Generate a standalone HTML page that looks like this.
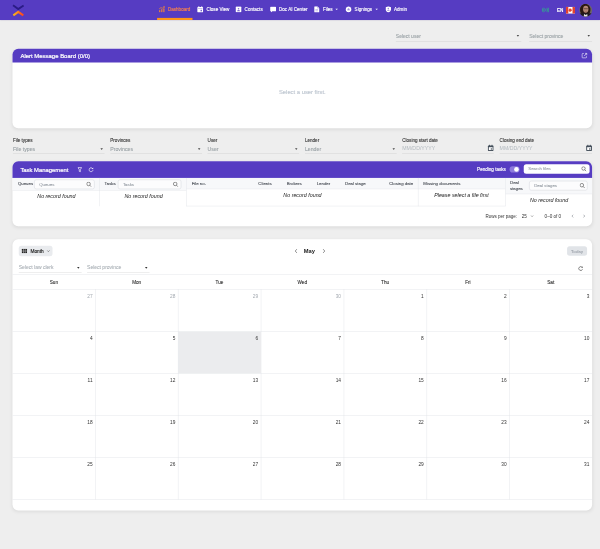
<!DOCTYPE html>
<html>
<head>
<meta charset="utf-8">
<title>Dashboard</title>
<style>
html,body{margin:0;padding:0;width:600px;height:549px;overflow:hidden;background:#eeeeee;}
*{box-sizing:border-box;}
#app{position:absolute;left:0;top:0;width:1440px;height:1318px;transform:scale(0.416667);transform-origin:0 0;filter:opacity(0.9999);font-family:"Liberation Sans",sans-serif;color:#222;}
.abs{position:absolute;}
.md{font-weight:normal;-webkit-text-stroke:0.35px currentColor;}
/* navbar */
#nav{position:absolute;left:0;top:0;width:1440px;height:48px;box-shadow:0 1px 3px rgba(40,20,120,0.35);background:rgba(85,59,194,0.995);}
.ni{position:absolute;top:0;height:48px;color:#fff;font-size:11px;font-weight:normal;-webkit-text-stroke:0.4px currentColor;line-height:44px;white-space:nowrap;}
.ni svg{position:absolute;top:15px;left:0;width:14px;height:14px;}
.ni span{position:absolute;left:22px;top:0;}
.nico{position:absolute;top:15px;}
.nt{position:absolute;top:0;height:48px;font-size:11px;font-weight:normal;-webkit-text-stroke:0.3px currentColor;line-height:44px;white-space:nowrap;}
.caret{position:absolute;top:20.5px;width:0;height:0;border-left:3px solid transparent;border-right:3px solid transparent;border-top:3.6px solid #fff;margin-left:1.5px;}
/* cards */
.card{position:absolute;left:30px;width:1391px;background:#fff;border-radius:14px;box-shadow:0 3px 9px rgba(0,0,0,0.075);}
.chead{position:absolute;left:0;top:0;width:100%;background:rgba(85,59,194,0.995);border-radius:14px 14px 0 0;color:#fff;font-weight:normal;}
.sel{position:absolute;border-bottom:1px solid #cfcfcf;color:#9aa2a6;font-size:12px;line-height:25px;-webkit-text-stroke:0.25px currentColor;}
.sel i.sm{right:5px;border-left-width:3.5px;border-right-width:3.5px;border-top-width:4.5px;border-top-color:#333;}
.sel i{position:absolute;right:4px;width:0;height:0;border-left:3.8px solid transparent;border-right:3.8px solid transparent;border-top:4.5px solid #4a4a4a;}
.flabel{position:absolute;font-size:11px;font-weight:normal;-webkit-text-stroke:0.28px currentColor;color:#383838;}
.nrf{position:absolute;font-size:12.8px;font-style:italic;color:#222;white-space:nowrap;}
.th{position:absolute;font-size:10.4px;font-weight:normal;-webkit-text-stroke:0.25px currentColor;color:#4a4f57;white-space:nowrap;}
.sbox{position:absolute;border:1px solid #ced2d8;border-radius:5px;background:rgba(252,252,253,0.995);color:#8f969e;font-size:10.4px;-webkit-text-stroke:0.15px currentColor;}
.dow{position:absolute;height:35px;line-height:36px;text-align:center;font-size:11.2px;font-weight:normal;-webkit-text-stroke:0.15px currentColor;color:#222;}
.dn{position:absolute;font-size:11.5px;line-height:13px;color:#343434;text-align:right;width:40px;}
.dn.o{color:#a3a9b0;}
.vl{position:absolute;width:1px;background:#dfe2e6;}
.hl{position:absolute;height:1px;background:#dfe2e6;}
</style>
</head>
<body>
<div id="app">

<!-- NAVBAR -->
<div id="nav">
  <svg class="abs" style="left:28px;top:8.500px" width="32" height="32" viewBox="0 0 32 32">
    <defs><linearGradient id="lg" x1="0" y1="0" x2="1" y2="0"><stop offset="0" stop-color="#f8b51c"/><stop offset="0.5" stop-color="#ff861a"/><stop offset="0.55" stop-color="#ff6a1a"/><stop offset="1" stop-color="#ff451f"/></linearGradient></defs>
    <path d="M3.300 3.600L15.800 12.600 28.600 4" fill="none" stroke="#2b1b86" stroke-width="4.500"/>
    <path d="M4 27.800L15.800 19.400 28 27.800" fill="none" stroke="url(#lg)" stroke-width="5"/>
  </svg>
  <svg class="nico" style="left:381px" width="15" height="15" viewBox="0 0 15 15"><rect x="1" y="9.500" width="2.600" height="5" fill="#ff8a2a"/><rect x="6" y="7" width="2.600" height="7.500" fill="#ff8a2a"/><rect x="11" y="5" width="2.600" height="9.500" fill="#ff8a2a"/><path d="M1 6.500L5.500 3.200 8.500 4.800 13.500 1" fill="none" stroke="#ff8a2a" stroke-width="1.600"/><path d="M10.500 0.500h3.800v3.800" fill="none" stroke="#ff8a2a" stroke-width="1.400"/></svg>
  <div class="nt" style="left:403px;color:#f9814a;">Dashboard</div>
  <svg class="nico" style="left:473px" width="15" height="15" viewBox="0 0 15 15"><rect x="0.500" y="1.800" width="14" height="13" rx="1.800" fill="#fff"/><rect x="3" y="0" width="2.200" height="3.500" rx="0.600" fill="#fff"/><rect x="9.800" y="0" width="2.200" height="3.500" rx="0.600" fill="#fff"/><rect x="2" y="5.300" width="11" height="1.100" fill="#553bc2" opacity="0.700"/><rect x="8.200" y="8.600" width="3.600" height="3.600" fill="#553bc2" opacity="0.800"/></svg>
  <div class="nt" style="left:495.5px;color:#fff;">Close View</div>
  <svg class="nico" style="left:565px" width="15" height="15" viewBox="0 0 15 15"><rect x="0.500" y="0.500" width="14" height="14" rx="1.800" fill="#fff"/><circle cx="7.500" cy="6" r="1.900" fill="#553bc2" opacity="0.750"/><path d="M4 11.800c0-2.300 1.600-3 3.500-3s3.500.7 3.500 3z" fill="#553bc2" opacity="0.750"/></svg>
  <div class="nt" style="left:587px;color:#fff;">Contacts</div>
  <svg class="nico" style="left:648px" width="15" height="15" viewBox="0 0 15 15"><path d="M2 1h11a1.500 1.500 0 0 1 1.500 1.500v8a1.500 1.500 0 0 1-1.500 1.500H5.500L2.500 14.800V12H2A1.500 1.500 0 0 1 .5 10.500v-8A1.500 1.500 0 0 1 2 1z" fill="#fff"/></svg>
  <div class="nt" style="left:669.5px;color:#fff;">Doc AI Center</div>
  <svg class="nico" style="left:754px" width="13" height="15" viewBox="0 0 13 15"><path d="M1.500 0h6.500l4.500 4.500V13.500a1.500 1.500 0 0 1-1.500 1.500h-9.500A1.500 1.500 0 0 1 0 13.500v-12A1.500 1.500 0 0 1 1.500 0z" fill="#fff"/><path d="M8 0v4.500h4.500" fill="none" stroke="#553bc2" stroke-width="0.900" opacity="0.700"/><path d="M3 8h6.500M3 11h6.500" stroke="#553bc2" stroke-width="1.100" opacity="0.700"/></svg>
  <div class="nt" style="left:775px;color:#fff;">Files</div>
  <svg class="nico" style="left:829px" width="15" height="15" viewBox="0 0 15 15"><path d="M7.500 0l1.700 1.300 2.100-.3.800 2 2 .800-.3 2.100L15 7.500l-1.200 1.600.3 2.100-2 .800-.8 2-2.100-.3L7.500 15l-1.700-1.300-2.100.3-.8-2-2-.800.3-2.100L0 7.500l1.200-1.600-.3-2.100 2-.800.8-2 2.100.3z" fill="#fff"/><path d="M7.500 3.600l1.200 2.500 2.700.3-2 1.900.5 2.700-2.400-1.300-2.400 1.300.5-2.700-2-1.900 2.700-.3z" fill="#553bc2" opacity="0.550"/></svg>
  <div class="nt" style="left:851px;color:#fff;">Signings</div>
  <svg class="nico" style="left:925px" width="14" height="15" viewBox="0 0 14 15"><path d="M7 0l6.500 2.300v4.700c0 3.800-2.700 6.400-6.500 8-3.800-1.600-6.500-4.200-6.500-8V2.300z" fill="#fff"/><circle cx="7" cy="5.500" r="1.800" fill="#553bc2" opacity="0.600"/><path d="M3.800 10.500c.4-1.800 1.700-2.300 3.200-2.300s2.800.5 3.200 2.300z" fill="#553bc2" opacity="0.600"/></svg>
  <div class="nt" style="left:945.5px;color:#fff;">Admin</div>
  <div class="abs" style="left:377px;top:43px;width:85px;height:5px;background:#ff9519;"></div>
  <div class="caret" style="left:803px;"></div>
  <div class="caret" style="left:899px;"></div>

  <!-- right side -->
  <svg class="abs" style="left:1300.500px;top:16.500px" width="17" height="14" viewBox="0 0 18 15"><circle cx="9" cy="7.500" r="1.800" fill="#2db58a"/><path d="M6.200 2.800a6.500 6.500 0 0 0 0 9.400M11.800 2.800a6.500 6.500 0 0 1 0 9.400M2.800 1.600a9 9 0 0 0 0 11.800M15.200 1.600a9 9 0 0 1 0 11.800" fill="none" stroke="#2db58a" stroke-width="2"/></svg>
  <div class="abs" style="left:1336.500px;top:18px;color:#fff;font-size:11px;font-weight:bold;-webkit-text-stroke:0.2px #fff;">EN</div>
  <svg class="abs" style="left:1358px;top:15.500px" width="22" height="17" viewBox="0 0 22 17"><rect x="0" y="0" width="22" height="17" rx="2" fill="#fff"/><path d="M0 2a2 2 0 0 1 2-2h4v17H2a2 2 0 0 1-2-2z" fill="#e2412f"/><path d="M22 2a2 2 0 0 0-2-2h-4v17h4a2 2 0 0 0 2-2z" fill="#e2412f"/><path d="M11 3.500l1 2 1.500-.6-.5 2.600 1.600-.5-.6 1.500 1 .5-2.500 1.800.3 1.200-2.400-.4v2h-.8v-2l-2.400.4.300-1.200L6 8.500l1-.5-.6-1.500 1.600.5-.5-2.600 1.500.6z" fill="#e2412f"/></svg>
  <svg class="abs" style="left:1390px;top:9px" width="31" height="31" viewBox="0 0 31 31">
    <defs><clipPath id="av"><circle cx="15.500" cy="15.500" r="15.500"/></clipPath></defs>
    <g clip-path="url(#av)">
      <rect width="31" height="31" fill="#6f6763"/>
      <ellipse cx="14.500" cy="15" rx="12.500" ry="15" fill="#2a1713"/>
      <rect x="0" y="23" width="31" height="8" fill="#1f1a20"/>
      <ellipse cx="15.800" cy="13" rx="6.300" ry="8.300" fill="#b48877"/>
      <rect x="10.500" y="10.500" width="10.500" height="2.600" rx="1.200" fill="#5b4038" opacity="0.850"/>
      <path d="M12 24.500l3.800 2.500 3.500-2.500 1 6.500h-9.500z" fill="#e8e4e4"/>
      <path d="M12.800 17.500q3 2 6 0" stroke="#8b5a50" stroke-width="1" fill="none"/>
    </g>
  </svg>
</div>

<!-- top selects -->
<div class="sel" style="left:950px;top:76px;width:301px;height:24px;padding-left:0;line-height:25px;">Select user<i style="top:8.300px;right:5px"></i></div>
<div class="sel" style="left:1270px;top:76px;width:151px;height:24px;padding-left:0;line-height:25px;">Select province<i style="top:8.300px;right:5px"></i></div>

<!-- ALERT CARD -->
<div class="card" style="top:117px;height:191px;">
  <div class="chead md" style="height:33px;line-height:33px;font-size:14.3px;-webkit-text-stroke:0.5px #fff;padding-left:19px;">Alert Message Board (0/0)</div>
  <svg class="abs" style="left:1365px;top:9px" width="15" height="15" viewBox="0 0 15 15"><path d="M6 2.500H3.500a1.500 1.500 0 0 0-1.500 1.500v7.500a1.500 1.500 0 0 0 1.500 1.500H11a1.500 1.500 0 0 0 1.500-1.500V9" fill="none" stroke="#fff" stroke-width="1.500"/><path d="M7 8.500L13 2.500M9 2h4.500v4.500" fill="none" stroke="#fff" stroke-width="1.500"/></svg>
  <div class="abs" style="left:0;top:96px;width:100%;text-align:center;font-size:14px;color:#bfc7d1;-webkit-text-stroke:0.35px currentColor;">Select a user first.</div>
</div>

<!-- FILTERS -->
<div class="flabel" style="left:31px;top:330px;">File types</div>
<div class="sel" style="left:31px;top:345px;width:220px;height:24px;line-height:27px;font-size:12.5px;">File types<i style="top:10.500px"></i></div>
<div class="flabel" style="left:264.6px;top:330px;">Provinces</div>
<div class="sel" style="left:264.6px;top:345px;width:220px;height:24px;line-height:27px;font-size:12.5px;">Provinces<i style="top:10.500px"></i></div>
<div class="flabel" style="left:498.2px;top:330px;">User</div>
<div class="sel" style="left:498.2px;top:345px;width:220px;height:24px;line-height:27px;font-size:12.5px;">User<i style="top:10.500px"></i></div>
<div class="flabel" style="left:731.8px;top:330px;">Lender</div>
<div class="sel" style="left:731.8px;top:345px;width:220px;height:24px;line-height:27px;font-size:12.5px;">Lender<i style="top:10.500px"></i></div>
<div class="flabel" style="left:965.4px;top:330px;">Closing start date</div>
<div class="sel" style="left:965.4px;top:345px;width:220px;height:24px;line-height:21px;font-size:12.5px;color:#b3bac0;-webkit-text-stroke:0;">MM/DD/YYYY
  <svg class="abs" style="right:0;top:2px" width="15.500" height="16" viewBox="0 0 13 14"><rect x="0.500" y="2" width="12" height="11.500" rx="1.500" fill="#434e5a"/><rect x="2.500" y="5.500" width="8" height="6" fill="#fff"/><rect x="3" y="0" width="1.800" height="3.500" fill="#434e5a"/><rect x="8.200" y="0" width="1.800" height="3.500" fill="#434e5a"/><rect x="6.500" y="8" width="3" height="2.500" fill="#434e5a"/></svg>
</div>
<div class="flabel" style="left:1199px;top:330px;">Closing end date</div>
<div class="sel" style="left:1199px;top:345px;width:222px;height:24px;line-height:21px;font-size:12.5px;color:#b3bac0;-webkit-text-stroke:0;">MM/DD/YYYY
  <svg class="abs" style="right:0;top:2px" width="15.500" height="16" viewBox="0 0 13 14"><rect x="0.500" y="2" width="12" height="11.500" rx="1.500" fill="#434e5a"/><rect x="2.500" y="5.500" width="8" height="6" fill="#fff"/><rect x="3" y="0" width="1.800" height="3.500" fill="#434e5a"/><rect x="8.200" y="0" width="1.800" height="3.500" fill="#434e5a"/><rect x="6.500" y="8" width="3" height="2.500" fill="#434e5a"/></svg>
</div>

<!-- TASK CARD -->
<div class="card" id="task" style="top:387px;height:155.5px;">
  <div class="chead md" style="height:40px;line-height:42px;font-size:14.1px;-webkit-text-stroke:0.5px #fff;padding-left:19px;">Task Management</div>
  <svg class="abs" style="left:156px;top:14px" width="11" height="13" viewBox="0 0 11 13"><path d="M1 1.200h9L6.800 6v5.500l-2.600-1.300V6z" fill="none" stroke="#fff" stroke-width="1.500" stroke-linejoin="round"/></svg>
  <svg class="abs" style="left:182px;top:14px" width="13" height="13" viewBox="0 0 13 13"><path d="M10.300 3.700A4.700 4.700 0 1 0 11.200 6.500" fill="none" stroke="#fff" stroke-width="1.700"/><path d="M11.800 0.800v3.800H8z" fill="#fff"/></svg>

  <div class="abs md" style="left:1115px;top:13px;color:#fff;font-size:11px;">Pending tasks</div>
  <div class="abs" style="left:1193px;top:12px;width:24px;height:15px;border-radius:8px;background:#8e7bdc;"></div>
  <div class="abs" style="left:1204px;top:14px;width:11px;height:11px;border-radius:50%;background:#fff;"></div>
  <div class="abs" style="left:1227px;top:7px;width:158px;height:23px;border-radius:6px;background:rgba(255,255,255,0.995);color:#959ca4;font-size:10.3px;-webkit-text-stroke:0.15px currentColor;line-height:23px;padding-left:11px;">Search files
    <svg class="abs" style="right:7px;top:5px" width="13" height="13" viewBox="0 0 11 11"><circle cx="4.500" cy="4.500" r="3.500" fill="none" stroke="#444" stroke-width="1.200"/><path d="M7.200 7.200L10.300 10.300" stroke="#444" stroke-width="1.200"/></svg>
  </div>

  <!-- subheader bg -->
  <div class="abs" style="left:0;top:40px;width:417px;height:29px;background:#f7f8fa;"></div>
  <div class="abs" style="left:417px;top:40px;width:766px;height:26px;background:#f7f8fa;"></div>
  <div class="abs" style="left:1183px;top:40px;width:208px;height:38px;background:#f7f8fa;"></div>
  <div class="hl" style="left:0;top:69px;width:417px;"></div>
  <div class="hl" style="left:417px;top:66px;width:766px;"></div>
  <div class="hl" style="left:1183px;top:78px;width:208px;"></div>
  <div class="vl" style="left:208px;top:40px;height:68px;"></div>
  <div class="vl" style="left:417px;top:40px;height:68px;"></div>
  <div class="vl" style="left:973px;top:40px;height:68px;"></div>
  <div class="vl" style="left:1183px;top:40px;height:68px;"></div>
  <div class="hl" style="left:417px;top:107px;width:766px;"></div>

  <div class="th" style="left:13px;top:49px;">Queues</div>
  <div class="sbox" style="left:52px;top:43.5px;width:144.5px;height:23.5px;line-height:21.5px;padding-left:11px;">Queues
    <svg class="abs" style="right:5.500px;top:4.500px" width="13" height="13" viewBox="0 0 11 11"><circle cx="4.600" cy="4.600" r="3.600" fill="none" stroke="#555" stroke-width="1.300"/><path d="M7.300 7.300L10.400 10.400" stroke="#555" stroke-width="1.300"/></svg>
  </div>
  <div class="th" style="left:221px;top:49px;">Tasks</div>
  <div class="sbox" style="left:253px;top:43.5px;width:151.5px;height:23.5px;line-height:21.5px;padding-left:11px;">Tasks
    <svg class="abs" style="right:5.500px;top:4.500px" width="13" height="13" viewBox="0 0 11 11"><circle cx="4.600" cy="4.600" r="3.600" fill="none" stroke="#555" stroke-width="1.300"/><path d="M7.300 7.300L10.400 10.400" stroke="#555" stroke-width="1.300"/></svg>
  </div>
  <div class="th" style="left:430px;top:47.500px;">File no.</div>
  <div class="th" style="left:590px;top:47.500px;">Clients</div>
  <div class="th" style="left:658px;top:47.500px;">Brokers</div>
  <div class="th" style="left:730px;top:47.500px;">Lender</div>
  <div class="th" style="left:798px;top:47.500px;">Deal stage</div>
  <div class="th" style="left:904px;top:47.500px;">Closing date</div>
  <div class="th" style="left:986px;top:47.500px;">Missing documents</div>
  <div class="th" style="left:1194px;top:45px;line-height:14.4px;white-space:normal;width:40px;">Deal stages</div>
  <div class="sbox" style="left:1240px;top:46.5px;width:140px;height:23.5px;line-height:21.5px;padding-left:11px;">Deal stages
    <svg class="abs" style="right:5.500px;top:4.500px" width="13" height="13" viewBox="0 0 11 11"><circle cx="4.600" cy="4.600" r="3.600" fill="none" stroke="#555" stroke-width="1.300"/><path d="M7.300 7.300L10.400 10.400" stroke="#555" stroke-width="1.300"/></svg>
  </div>

  <div class="nrf" style="left:59.500px;top:77px;">No record found</div>
  <div class="nrf" style="left:268.500px;top:77px;">No record found</div>
  <div class="nrf" style="left:650px;top:74px;">No record found</div>
  <div class="nrf" style="left:1012px;top:74px;">Please select a file first</div>
  <div class="nrf" style="left:1242px;top:85px;">No record found</div>

  <div class="abs" style="left:1135px;top:124.500px;font-size:10.8px;color:#333;">Rows per page:</div>
  <div class="abs" style="left:1222px;top:124.500px;font-size:11px;color:#333;">25</div>
  <svg class="abs" style="left:1243px;top:129px" width="8" height="6" viewBox="0 0 8 6"><path d="M1 1l3 3 3-3" fill="none" stroke="#555" stroke-width="1.200"/></svg>
  <div class="abs" style="left:1277px;top:124.500px;font-size:11px;color:#333;">0–0 of 0</div>
  <svg class="abs" style="left:1341px;top:127px" width="6" height="9" viewBox="0 0 6 9"><path d="M5 1L1.500 4.500 5 8" fill="none" stroke="#7a8088" stroke-width="1.400"/></svg>
  <svg class="abs" style="left:1369px;top:127px" width="6" height="9" viewBox="0 0 6 9"><path d="M1 1l3.500 3.500L1 8" fill="none" stroke="#7a8088" stroke-width="1.400"/></svg>
</div>

<!-- CALENDAR CARD -->
<div class="card" id="cal" style="top:574px;height:651px;">
  <div class="abs" style="left:15px;top:15.5px;width:81px;height:25px;border-radius:6px;background:#e9ebee;"></div>
  <svg class="abs" style="left:22px;top:22.5px" width="13" height="11" viewBox="0 0 13 11"><rect x="0" y="0" width="13" height="11" rx="1" fill="#222"/><path d="M4.4 0v11M8.600 0v11M0 5.500h13" stroke="#e9ebee" stroke-width="1"/></svg>
  <div class="abs md" style="left:43px;top:22.5px;font-size:11.5px;color:#222;">Month</div>
  <svg class="abs" style="left:82px;top:26px" width="8" height="6" viewBox="0 0 8 6"><path d="M1 1l3 3 3-3" fill="none" stroke="#444" stroke-width="1.300"/></svg>

  <svg class="abs" style="left:677px;top:23px" width="7" height="11" viewBox="0 0 7 11"><path d="M5.500 1L1.500 5.500l4 4.500" fill="none" stroke="#444" stroke-width="1.400"/></svg>
  <div class="abs" style="left:699px;top:20px;font-size:13.8px;font-weight:bold;color:#222;">May</div>
  <svg class="abs" style="left:744px;top:23px" width="7" height="11" viewBox="0 0 7 11"><path d="M1.500 1l4 4.500-4 4.500" fill="none" stroke="#444" stroke-width="1.400"/></svg>

  <div class="abs" style="left:1331px;top:17px;width:48px;height:23px;border-radius:6px;background:rgba(225,228,232,0.995);color:#9fa5ad;font-size:10px;font-weight:bold;text-align:center;line-height:23px;">Today</div>

  <div class="sel" style="left:15px;top:56px;width:151px;height:25px;font-size:12px;line-height:24px;border-bottom-color:#d6d6d6;color:#a3aab0;-webkit-text-stroke:0.12px currentColor;">Select law clerk<i class="sm" style="top:10.5px;"></i></div>
  <div class="sel" style="left:179px;top:56px;width:150px;height:25px;font-size:12px;line-height:24px;border-bottom-color:#d6d6d6;color:#a3aab0;-webkit-text-stroke:0.12px currentColor;">Select province<i class="sm" style="top:10.5px;"></i></div>
  <svg class="abs" style="left:1357px;top:64px" width="13" height="13" viewBox="0 0 13 13"><path d="M10.500 4A4.600 4.600 0 1 0 11 8" fill="none" stroke="#444" stroke-width="1.500"/><path d="M11.500 1v3.500H8z" fill="#444"/></svg>

  <!-- grid -->
  <div class="hl" style="left:0;top:85.0px;width:100%;"></div>
  <div class="hl" style="left:0;top:120.3px;width:100%;"></div>
  <div class="hl" style="left:0;top:221.3px;width:100%;"></div>
  <div class="hl" style="left:0;top:322.3px;width:100%;"></div>
  <div class="hl" style="left:0;top:423.3px;width:100%;"></div>
  <div class="hl" style="left:0;top:524.3px;width:100%;"></div>
  <div class="hl" style="left:0;top:625.3px;width:100%;"></div>
  <div class="abs" style="left:398.4px;top:222.3px;width:197.7px;height:100.0px;background:#ebecee;"></div>
  <div class="vl" style="left:198.7px;top:120.3px;height:505.0px;"></div>
  <div class="vl" style="left:397.4px;top:120.3px;height:505.0px;"></div>
  <div class="vl" style="left:596.1px;top:120.3px;height:505.0px;"></div>
  <div class="vl" style="left:794.9px;top:120.3px;height:505.0px;"></div>
  <div class="vl" style="left:993.6px;top:120.3px;height:505.0px;"></div>
  <div class="vl" style="left:1192.3px;top:120.3px;height:505.0px;"></div>
  <div class="dow" style="left:0.0px;top:85.0px;width:198.7px;">Sun</div>
  <div class="dow" style="left:198.7px;top:85.0px;width:198.7px;">Mon</div>
  <div class="dow" style="left:397.4px;top:85.0px;width:198.7px;">Tue</div>
  <div class="dow" style="left:596.1px;top:85.0px;width:198.7px;">Wed</div>
  <div class="dow" style="left:794.9px;top:85.0px;width:198.7px;">Thu</div>
  <div class="dow" style="left:993.6px;top:85.0px;width:198.7px;">Fri</div>
  <div class="dow" style="left:1192.3px;top:85.0px;width:198.7px;">Sat</div>
  <div class="dn o" style="left:152.2px;top:131.3px;">27</div>
  <div class="dn o" style="left:350.9px;top:131.3px;">28</div>
  <div class="dn o" style="left:549.6px;top:131.3px;">29</div>
  <div class="dn o" style="left:748.4px;top:131.3px;">30</div>
  <div class="dn" style="left:947.1px;top:131.3px;">1</div>
  <div class="dn" style="left:1145.8px;top:131.3px;">2</div>
  <div class="dn" style="left:1344.5px;top:131.3px;">3</div>
  <div class="dn" style="left:152.2px;top:232.3px;">4</div>
  <div class="dn" style="left:350.9px;top:232.3px;">5</div>
  <div class="dn" style="left:549.6px;top:232.3px;">6</div>
  <div class="dn" style="left:748.4px;top:232.3px;">7</div>
  <div class="dn" style="left:947.1px;top:232.3px;">8</div>
  <div class="dn" style="left:1145.8px;top:232.3px;">9</div>
  <div class="dn" style="left:1344.5px;top:232.3px;">10</div>
  <div class="dn" style="left:152.2px;top:333.3px;">11</div>
  <div class="dn" style="left:350.9px;top:333.3px;">12</div>
  <div class="dn" style="left:549.6px;top:333.3px;">13</div>
  <div class="dn" style="left:748.4px;top:333.3px;">14</div>
  <div class="dn" style="left:947.1px;top:333.3px;">15</div>
  <div class="dn" style="left:1145.8px;top:333.3px;">16</div>
  <div class="dn" style="left:1344.5px;top:333.3px;">17</div>
  <div class="dn" style="left:152.2px;top:434.3px;">18</div>
  <div class="dn" style="left:350.9px;top:434.3px;">19</div>
  <div class="dn" style="left:549.6px;top:434.3px;">20</div>
  <div class="dn" style="left:748.4px;top:434.3px;">21</div>
  <div class="dn" style="left:947.1px;top:434.3px;">22</div>
  <div class="dn" style="left:1145.8px;top:434.3px;">23</div>
  <div class="dn" style="left:1344.5px;top:434.3px;">24</div>
  <div class="dn" style="left:152.2px;top:535.3px;">25</div>
  <div class="dn" style="left:350.9px;top:535.3px;">26</div>
  <div class="dn" style="left:549.6px;top:535.3px;">27</div>
  <div class="dn" style="left:748.4px;top:535.3px;">28</div>
  <div class="dn" style="left:947.1px;top:535.3px;">29</div>
  <div class="dn" style="left:1145.8px;top:535.3px;">30</div>
  <div class="dn" style="left:1344.5px;top:535.3px;">31</div>
</div>

</div>
</body>
</html>
